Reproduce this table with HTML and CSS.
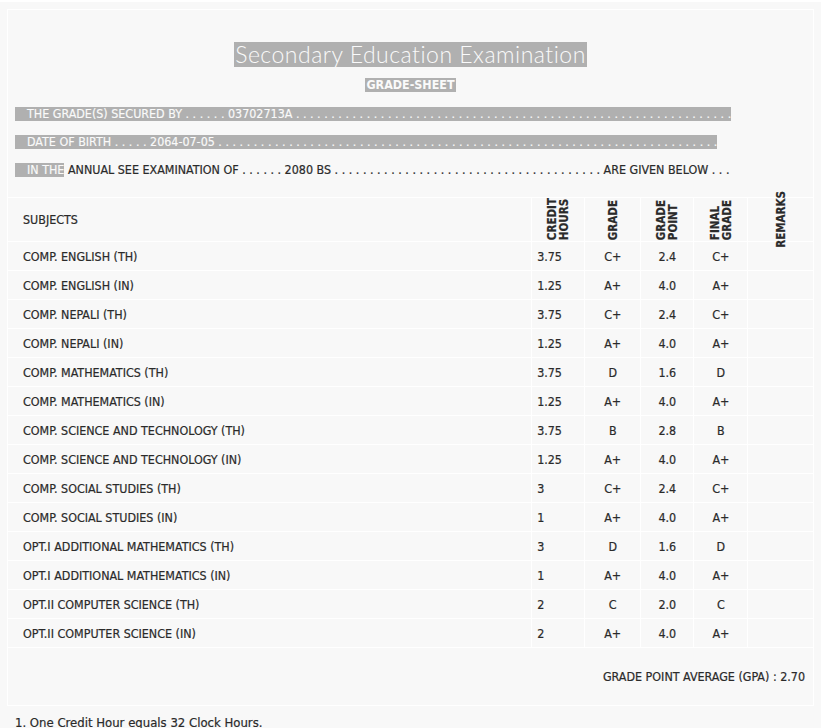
FILE: index.html
```html
<!DOCTYPE html>
<html>
<head>
<meta charset="utf-8">
<link rel="stylesheet" href="styles.css">
</head>
<body>
<div class="sheet">
  <div class="box">
    <div class="title-row"><span class="title">Secondary Education Examination</span></div>
    <div class="sub-row"><span class="subtitle">GRADE-SHEET</span></div>
    <div class="info info-1"><span class="hl">THE GRADE(S) SECURED BY . . . . . . 03702713A . . . . . . . . . . . . . . . . . . . . . . . . . . . . . . . . . . . . . . . . . . . . . . . . . . . . . . . . . . . . . .</span></div>
    <div class="info info-2"><span class="hl">DATE OF BIRTH . . . . . 2064-07-05 . . . . . . . . . . . . . . . . . . . . . . . . . . . . . . . . . . . . . . . . . . . . . . . . . . . . . . . . . . . . . . . . . . . . . . .</span></div>
    <div class="info info-3"><span class="hl">IN THE</span><span class="plain"> ANNUAL SEE EXAMINATION OF . . . . . . 2080 BS . . . . . . . . . . . . . . . . . . . . . . . . . . . . . . . . . . . . . . ARE GIVEN BELOW . . .</span></div>

    <table class="grades">
      <colgroup>
        <col class="c-subj"><col class="c-ch"><col class="c-gr"><col class="c-gp"><col class="c-fg"><col class="c-rm">
      </colgroup>
      <thead>
        <tr>
          <th class="th-subj">SUBJECTS</th>
          <th class="th-rot"><div class="rot">CREDIT<br>HOURS</div></th>
          <th class="th-rot"><div class="rot">GRADE</div></th>
          <th class="th-rot"><div class="rot">GRADE<br>POINT</div></th>
          <th class="th-rot"><div class="rot">FINAL<br>GRADE</div></th>
          <th class="th-rm"><div class="rm-wrap"><div class="rot">REMARKS</div></div></th>
        </tr>
      </thead>
      <tbody>
        <tr><td class="subj">COMP. ENGLISH (TH)</td><td class="ch">3.75</td><td class="ctr">C+</td><td class="ctr">2.4</td><td class="ctr">C+</td><td></td></tr>
        <tr><td class="subj">COMP. ENGLISH (IN)</td><td class="ch">1.25</td><td class="ctr">A+</td><td class="ctr">4.0</td><td class="ctr">A+</td><td></td></tr>
        <tr><td class="subj">COMP. NEPALI (TH)</td><td class="ch">3.75</td><td class="ctr">C+</td><td class="ctr">2.4</td><td class="ctr">C+</td><td></td></tr>
        <tr><td class="subj">COMP. NEPALI (IN)</td><td class="ch">1.25</td><td class="ctr">A+</td><td class="ctr">4.0</td><td class="ctr">A+</td><td></td></tr>
        <tr><td class="subj">COMP. MATHEMATICS (TH)</td><td class="ch">3.75</td><td class="ctr">D</td><td class="ctr">1.6</td><td class="ctr">D</td><td></td></tr>
        <tr><td class="subj">COMP. MATHEMATICS (IN)</td><td class="ch">1.25</td><td class="ctr">A+</td><td class="ctr">4.0</td><td class="ctr">A+</td><td></td></tr>
        <tr><td class="subj">COMP. SCIENCE AND TECHNOLOGY (TH)</td><td class="ch">3.75</td><td class="ctr">B</td><td class="ctr">2.8</td><td class="ctr">B</td><td></td></tr>
        <tr><td class="subj">COMP. SCIENCE AND TECHNOLOGY (IN)</td><td class="ch">1.25</td><td class="ctr">A+</td><td class="ctr">4.0</td><td class="ctr">A+</td><td></td></tr>
        <tr><td class="subj">COMP. SOCIAL STUDIES (TH)</td><td class="ch">3</td><td class="ctr">C+</td><td class="ctr">2.4</td><td class="ctr">C+</td><td></td></tr>
        <tr><td class="subj">COMP. SOCIAL STUDIES (IN)</td><td class="ch">1</td><td class="ctr">A+</td><td class="ctr">4.0</td><td class="ctr">A+</td><td></td></tr>
        <tr><td class="subj">OPT.I ADDITIONAL MATHEMATICS (TH)</td><td class="ch">3</td><td class="ctr">D</td><td class="ctr">1.6</td><td class="ctr">D</td><td></td></tr>
        <tr><td class="subj">OPT.I ADDITIONAL MATHEMATICS (IN)</td><td class="ch">1</td><td class="ctr">A+</td><td class="ctr">4.0</td><td class="ctr">A+</td><td></td></tr>
        <tr><td class="subj">OPT.II COMPUTER SCIENCE (TH)</td><td class="ch">2</td><td class="ctr">C</td><td class="ctr">2.0</td><td class="ctr">C</td><td></td></tr>
        <tr><td class="subj">OPT.II COMPUTER SCIENCE (IN)</td><td class="ch">2</td><td class="ctr">A+</td><td class="ctr">4.0</td><td class="ctr">A+</td><td></td></tr>
        <tr class="gpa-row"><td colspan="6" class="gpa">GRADE POINT AVERAGE (GPA) : 2.70</td></tr>
      </tbody>
    </table>
  </div>
  <div class="notes">1. One Credit Hour equals 32 Clock Hours.</div>
</div>
</body>
</html>
```

FILE: styles.css
```css
* { box-sizing: border-box; }

html, body {
  margin: 0;
  padding: 0;
  background: #ffffff;
}

body {
  font-family: "DejaVu Sans Condensed", "DejaVu Sans", sans-serif;
  font-stretch: condensed;
  font-size: 12.4px;
  color: #2a2a2a;
  -webkit-text-stroke: 0.2px #2a2a2a;
}

.sheet {
  width: 821px;
  margin-top: 2px;
  background: #f8f8f8;
  padding: 7px 7px 20px 7px;
}

.box {
  border: 1px solid #ffffff;
  padding-top: 32px;
}

.title-row,
.sub-row {
  display: flex;
  justify-content: center;
}

.title {
  display: block;
  height: 25px;
  line-height: 25px;
  padding: 0 1px;
  background: #b0b0b0;
  color: #fafafa;
  -webkit-text-stroke: 0;
  font-family: Lato, "Open Sans", sans-serif;
  font-weight: 300;
  font-stretch: normal;
  font-size: 23px;
  letter-spacing: 0.5px;
}

.sub-row {
  margin-top: 11px;
}

.subtitle {
  display: block;
  height: 14px;
  line-height: 14px;
  padding: 0 1px;
  background: #b0b0b0;
  color: #fafafa;
  -webkit-text-stroke: 0;
  font-weight: bold;
}

.info {
  display: flex;
  margin-left: 7px;
  height: 14px;
  line-height: 14px;
  white-space: pre;
}

.info-1 { margin-top: 15px; }
.info-2 { margin-top: 14px; }
.info-3 { margin-top: 14px; }

.hl {
  display: block;
  background: #b0b0b0;
  color: #fafafa;
  -webkit-text-stroke: 0.15px #fafafa;
  padding-left: 12px;
}

.plain {
  display: block;
}

.grades {
  width: 100%;
  margin-top: 20px;
  border-collapse: collapse;
  table-layout: fixed;
}

.c-subj { width: 523px; }
.c-ch { width: 53px; }
.c-gr { width: 56px; }
.c-gp { width: 53px; }
.c-fg { width: 54px; }
.c-rm { width: 65px; }

.grades tr {
  border-top: 1px solid #ffffff;
}

.grades td,
.grades th {
  padding: 0;
  border-left: 1px solid #ffffff;
}

.grades td:first-child,
.grades th:first-child,
.gpa {
  border-left: none;
}

.grades thead tr {
  height: 41px;
}

.th-subj {
  text-align: left;
  font-weight: normal;
  padding-left: 15px !important;
  vertical-align: middle;
}

.th-rot {
  vertical-align: bottom;
  padding-bottom: 1px !important;
}

.rot {
  writing-mode: vertical-rl;
  transform: rotate(180deg);
  font-weight: bold;
  font-size: 11.5px;
  line-height: 12px;
  text-align: left;
  margin: 0 auto;
}

.th-rm {
  vertical-align: middle;
}

.rm-wrap {
  height: 40px;
  display: flex;
  align-items: center;
  justify-content: center;
}

.grades tbody tr {
  height: 29px;
}

.subj {
  padding-left: 15px !important;
}

.ch {
  padding-left: 5px !important;
}

.ctr {
  text-align: center;
}

.grades tbody tr.gpa-row {
  height: 57px;
}

.gpa {
  text-align: right;
  padding-right: 8px !important;
}

.notes {
  margin-top: 9px;
  margin-left: 8px;
  font-size: 13px;
}
```
